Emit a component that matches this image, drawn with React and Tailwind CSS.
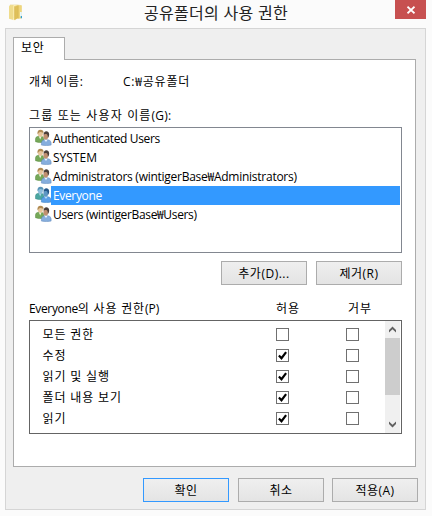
import React from "react";

const users = [
  { name: "Authenticated Users", spacing: "tracking-[-0.36px]" },
  { name: "SYSTEM", spacing: "tracking-[0px]" },
  { name: "Administrators (wintigerBase₩Administrators)", spacing: "tracking-[-0.26px]" },
  { name: "Everyone", spacing: "tracking-[-0.35px]", selected: true },
  { name: "Users (wintigerBase₩Users)", spacing: "tracking-[-0.34px]" },
];

const permissions = [
  { name: "모든 권한", allow: false },
  { name: "수정", allow: true },
  { name: "읽기 및 실행", allow: true },
  { name: "폴더 내용 보기", allow: true },
  { name: "읽기", allow: true },
];

function FolderIcon() {
  return (
    <svg width="14" height="17" viewBox="0 0 14 17" className="block">
      <path d="M1 1h7.5l3.8.6V14H1z" fill="#f6e7a2" stroke="#e6d083" strokeWidth=".6" />
      <path d="M0 2.2 4.5 1v15L0 14.8z" fill="#efdc8c" />
      <path d="M4.5 1.2h2v15h-2z" fill="#fff3bd" />
      <path d="m5.6 2.4 3.8-1.2V14l-3.8 2z" fill="#dfc05a" />
      <path d="M9.2 1.5h3.4V14l-3.4.8z" fill="#efd67c" />
      <path d="M5.6 2.2v13.6M9.3 1.6v12.8" stroke="#cfa83f" strokeWidth=".5" />
      <path d="M11 8h1.8v4.5H11z" fill="#e5f7ff" />
      <path d="M11.8 12h1.2v2.3h-1.2z" fill="#2fa1da" />
    </svg>
  );
}

function UsersIcon({ selected }) {
  const hair1 = selected ? "#5b96b8" : "#b08a52";
  const face1 = selected ? "#8fbedd" : "#e8c79c";
  const body1 = selected ? "#4ba6a0" : "#76a858";
  const hair2 = selected ? "#25588a" : "#4a3f3a";
  const face2 = selected ? "#5e97c4" : "#c09070";
  const body2 = selected ? "#5b9fe6" : "#86aedd";
  return (
    <svg width="17" height="17" viewBox="0 0 17 17" className="block shrink-0">
      <path d="M.5 12.7V9.7Q.7 7.6 3.1 7.2h3.6q2 .4 2.2 3v3q-4.2 1-8.4-.5z" fill={body1} stroke={selected ? "#358889" : "#568a42"} strokeWidth=".5" />
      <path d="m3.8 7.2 1.4 3.4 1.4-3.4z" fill={selected ? "#a7d4e8" : "#eef6e5"} />
      <ellipse cx="5.4" cy="4.5" rx="2.5" ry="3.2" fill={face1} />
      <path d="M2.6 5.6C1.9 2.4 3.3.8 5.5.8s3.5 1.3 3 4.2C8 3.5 7 3.1 5.5 3 4 3.1 3.5 4.1 2.6 5.6z" fill={hair1} />
      <path d="M6.4 16.1v-2.4q.3-2.6 3-3h3.7q2.6.4 3 3v2.4q-4.8 1-9.7 0z" fill={body2} stroke={selected ? "#377cc5" : "#5c86bb"} strokeWidth=".5" />
      <path d="m9.3 10.7 1.7 2.4 1.6-2.4z" fill={selected ? "#b5dcfa" : "#edf6ff"} />
      <ellipse cx="10.8" cy="7.2" rx="2.4" ry="3.4" fill={face2} />
      <path d="M8.6 5.6C8.9 3 10 2.2 11.5 2.3c2.3.2 3.1 2 2.5 4.8l-1 1.9c-.2-2-.4-3.3-1.2-3.8-1.2-.3-2.3-.2-3.2.4z" fill={hair2} />
    </svg>
  );
}

function CheckBox({ checked }) {
  return (
    <span className="flex h-[13px] w-[13px] shrink-0 items-center justify-center border border-[#707070] bg-white">
      {checked && (
        <svg width="11" height="11" viewBox="0 0 11 11" className="block shrink-0">
          <path d="M1.9 5.4 4.5 8.2 9.1 2.2" fill="none" stroke="#000" strokeWidth="2.2" />
        </svg>
      )}
    </span>
  );
}

function Button({ children, primary }) {
  return (
    <button
      className={`flex h-6 w-[86px] shrink-0 items-center justify-center border bg-linear-to-b from-[#efefef] to-[#e4e4e4] ${
        primary ? "border-[#3399ff]" : "border-[#acacac]"
      }`}
    >
      <span className="whitespace-nowrap tracking-[0.5px]">{children}</span>
    </button>
  );
}

export default function App() {
  return (
    <div className="h-[516px] w-[432px] overflow-hidden bg-[#fbfbfb] font-['Open_Sans','Noto_Sans_CJK_KR',sans-serif] text-[12px] leading-[19px] text-black">
      <header className="flex h-7 items-start">
        <div className="w-[395px] shrink-0">
          <div className="flex pl-[9px]">
            <div className="pt-[4px]"><FolderIcon /></div>
            <h1 className="ml-[121px] h-7 whitespace-nowrap text-[16px] leading-[26px] tracking-[0.3px] text-[#222]">공유폴더의 사용 권한</h1>
          </div>
        </div>
        <button className="flex h-[19px] w-[31px] items-center justify-center bg-[#c75050]">
          <svg width="8" height="8" viewBox="0 0 8 8" className="block">
            <path d="m.5.7 7 6.6m0-6.6-7 6.6" stroke="#fff" strokeWidth="1.8" />
          </svg>
        </button>
      </header>

      <main className="ml-[5px] h-[482px] w-[421px] border border-[#d5d5d5] bg-[#efefef] pl-[7px] pt-2">
        <div className="relative z-10 flex h-[23px] w-[52px] border border-b-0 border-[#acacac] bg-white pl-[7px] leading-[20px]">
          <span className="whitespace-nowrap tracking-[0.8px]">보안</span>
        </div>
        <section className="-mt-px h-[408px] w-[403px] border border-[#acacac] bg-white pl-[15px] pt-[12px]">
          <div className="flex h-[19px] whitespace-nowrap">
            <span className="w-[94px] tracking-[0.7px]">개체 이름:</span>
            <span className="tracking-[0.8px]">C:₩공유폴더</span>
          </div>
          <div className="mt-[15px] h-[19px] whitespace-nowrap tracking-[1.15px]">
            그룹 또는 사용자 이름<span className="tracking-[0.2px]">(G):</span>
          </div>

          <ul className="mt-[2px] h-[126px] w-[373px] border border-[#828790] pt-px">
            {users.map((user) => (
              <li key={user.name} className="flex h-[19px] pl-[5px]">
                <UsersIcon selected={user.selected} />
                <span
                  className={`-ml-px mr-px grow whitespace-nowrap pl-[2px] ${user.spacing} ${
                    user.selected ? "bg-[#3399ff] text-white" : ""
                  }`}
                >
                  {user.name}
                </span>
              </li>
            ))}
          </ul>

          <div className="mt-2 flex w-[373px] justify-end gap-[9px]">
            <Button>추가(D)...</Button>
            <Button>제거(R)</Button>
          </div>

          <div className="mt-[14px] flex h-[19px] whitespace-nowrap tracking-[1px]">
            <span className="w-[247px]">
              <span className="tracking-[-0.35px]">Everyone</span>
              <span className="tracking-[0.8px]">의 사용 권한</span>
              <span className="tracking-[0px]">(P)</span>
            </span>
            <span className="w-[72px]">허용</span>
            <span>거부</span>
          </div>

          <div className="mt-[2px] flex h-[114px] w-[373px] justify-between border border-[#646464]">
            <div className="pt-[3px]">
              {permissions.map((permission) => (
                <div key={permission.name} className="flex h-[21px] items-center">
                  <span className="w-[246px] whitespace-nowrap pl-[12.5px] tracking-[0.85px]">{permission.name}</span>
                  <span className="w-[70px]"><CheckBox checked={permission.allow} /></span>
                  <CheckBox />
                </div>
              ))}
            </div>
            <div className="mr-px flex h-[112px] w-[15px] flex-col bg-[#f0f0f0]">
              <svg width="15" height="17" viewBox="0 0 15 17" className="block shrink-0">
                <path d="M4 11.5V9l3.5-3.5L11 9v2.5L7.5 8.3z" fill="#606060" />
              </svg>
              <div className="h-[57px] bg-[#cdcdcd]" />
              <div className="grow" />
              <svg width="15" height="17" viewBox="0 0 15 17" className="block shrink-0">
                <path d="M4 5.5V8l3.5 3.5L11 8V5.5L7.5 8.7z" fill="#606060" />
              </svg>
            </div>
          </div>
        </section>

        <footer className="mt-[11px] flex gap-[9px] pl-[130px]">
          <Button primary>확인</Button>
          <Button>취소</Button>
          <div className="-ml-px"><Button>적용(A)</Button></div>
        </footer>
      </main>
    </div>
  );
}
